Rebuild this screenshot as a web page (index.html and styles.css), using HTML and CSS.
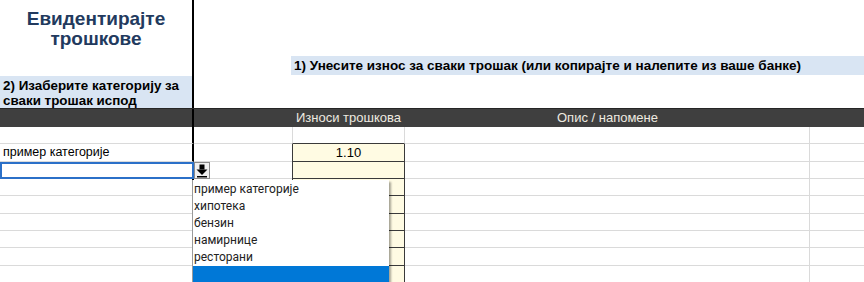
FILE: index.html
```html
<!DOCTYPE html>
<html lang="sr">
<head>
  <meta charset="UTF-8">
  <title>Евидентирајте трошкове</title>
  <meta name="viewport" content="width=device-width, initial-scale=1.0">
  <link rel="stylesheet" href="styles.css">
</head>
<body>
  <div class="sheet">
    <div class="top">
      <div class="top-left">
        <h1 class="title">Евидентирајте<br>трошкове</h1>
        <div class="band band-left">2) Изаберите категорију за<br>сваки трошак испод</div>
      </div>
      <div class="top-right">
        <div class="band band-right">1) Унесите износ за сваки трошак (или копирајте и налепите из ваше банке)</div>
      </div>
    </div>

    <div class="row head">
      <div class="cell a"></div>
      <div class="cell b"></div>
      <div class="cell c">Износи трошкова</div>
      <div class="cell d">Опис / напомене</div>
      <div class="cell e"></div>
    </div>

    <div class="row blank">
      <div class="cell a"></div><div class="cell b"></div><div class="cell c"></div><div class="cell d"></div><div class="cell e"></div>
    </div>
    <div class="row data tall first">
      <div class="cell a">пример категорије</div><div class="cell b"></div><div class="cell c num">1.10</div><div class="cell d"></div><div class="cell e"></div>
    </div>
    <div class="row data">
      <div class="cell a selected"></div>
      <div class="cell b">
        <span class="drop-btn">
          <svg width="14" height="15" viewBox="0 0 14 15">
            <rect x="4.5" y="1.5" width="5" height="5" fill="#000"/>
            <polygon points="1.5,6.5 12.5,6.5 7,12" fill="#000"/>
            <rect x="2" y="13" width="10" height="1.5" fill="#000"/>
          </svg>
        </span>
      </div>
      <div class="cell c"></div><div class="cell d"></div><div class="cell e"></div>
    </div>
    <div class="row data">
      <div class="cell a"></div><div class="cell b"></div><div class="cell c"></div><div class="cell d"></div><div class="cell e"></div>
    </div>
    <div class="row data tall">
      <div class="cell a"></div><div class="cell b"></div><div class="cell c"></div><div class="cell d"></div><div class="cell e"></div>
    </div>
    <div class="row data">
      <div class="cell a"></div><div class="cell b"></div><div class="cell c"></div><div class="cell d"></div><div class="cell e"></div>
    </div>
    <div class="row data">
      <div class="cell a"></div><div class="cell b"></div><div class="cell c"></div><div class="cell d"></div><div class="cell e"></div>
    </div>
    <div class="row data tall">
      <div class="cell a"></div><div class="cell b"></div><div class="cell c"></div><div class="cell d"></div><div class="cell e"></div>
    </div>
    <div class="row data">
      <div class="cell a"></div><div class="cell b"></div><div class="cell c"></div><div class="cell d"></div><div class="cell e"></div>
    </div>

    <ul class="dropdown">
      <li>пример категорије</li>
      <li>хипотека</li>
      <li>бензин</li>
      <li>намирнице</li>
      <li>ресторани</li>
      <li class="active"></li>
    </ul>
  </div>
</body>
</html>
```

FILE: styles.css
```css
html, body {
  margin: 0;
  padding: 0;
  overflow: hidden;
  background: #fff;
}
.sheet {
  position: relative;
  width: 864px;
  height: 282px;
  font-family: "Liberation Sans", Arial, sans-serif;
  font-size: 12.5px;
  color: #000;
}
.top {
  display: flex;
  height: 108px;
}
.top-left {
  width: 192px;
  border-right: 2px solid #000;
  display: flex;
  flex-direction: column;
}
.title {
  margin: 0;
  height: 76px;
  box-sizing: border-box;
  padding-top: 9px;
  font-size: 19px;
  line-height: 20px;
  font-weight: bold;
  text-align: center;
  color: #223a5e;
}
.band {
  background: #d9e5f3;
  font-weight: bold;
  font-size: 13.4px;
  box-sizing: border-box;
}
.band-left {
  height: 32px;
  padding: 2px 0 0 3px;
  line-height: 15px;
  white-space: nowrap;
}
.top-right {
  flex: 1;
  padding-top: 56px;
  padding-left: 97px;
}
.band-right {
  height: 19px;
  line-height: 19px;
  padding-left: 3px;
  font-size: 13.5px;
  white-space: nowrap;
}
.row {
  display: flex;
  height: 17px;
}
.row.tall {
  height: 18px;
}
.cell {
  box-sizing: border-box;
  height: 100%;
  border-bottom: 1px solid #dadada;
  line-height: 16px;
  white-space: nowrap;
}
.a {
  width: 194px;
  border-right: 2px solid #000;
  padding-left: 3px;
}
.b { width: 98px; position: relative; }
.c { width: 113px; }
.d { width: 405px; border-right: 1px solid #dadada; }
.e { flex: 1; }

.head {
  height: 19px;
  background: #3f3f3f;
  border-top: 1px solid #262626;
  box-sizing: border-box;
  font-size: 13px;
}
.head .cell {
  border-bottom: none;
  color: #eeeae0;
  line-height: 18px;
  text-align: center;
}
.head .d { border-right: none; }

.blank .c {
  border-left: 1px solid #dadada;
  border-right: 1px solid #dadada;
  border-bottom-color: #3a3a3a;
}
.data .c {
  background: #fffbe3;
  border-left: 1px solid #3a3a3a;
  border-right: 1px solid #3a3a3a;
  border-bottom: 1px solid #3a3a3a;
}
.num {
  text-align: center;
  font-size: 13px;
}
.first .cell {
  line-height: 17px;
}
.selected {
  outline: 2px solid #2b70c8;
  outline-offset: -2px;
}
.drop-btn {
  position: absolute;
  left: 0;
  top: 0;
  width: 16px;
  height: 17px;
  box-sizing: border-box;
  background: #f0f0f0;
  border: 1px solid #8a8a8a;
  display: flex;
  align-items: center;
  justify-content: center;
}
.dropdown {
  position: absolute;
  left: 192px;
  top: 180px;
  width: 197px;
  height: 110px;
  margin: 0;
  padding: 0;
  list-style: none;
  background: #fff;
  border-left: 1px solid #9a9a9a;
  box-sizing: border-box;
  box-shadow: 2px 2px 2px rgba(0, 0, 0, 0.35);
  font-family: Roboto, "Noto Sans", sans-serif;
  font-size: 12px;
  color: #222;
}
.dropdown li {
  height: 17px;
  line-height: 18px;
  padding-left: 1px;
}
.dropdown li.active {
  margin-top: 1px;
  height: 30px;
  background: #0078d7;
}
```
